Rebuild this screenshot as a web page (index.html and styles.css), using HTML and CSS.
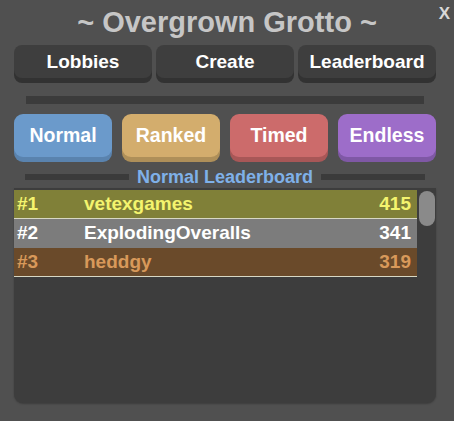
FILE: index.html
```html
<!DOCTYPE html>
<html lang="en">
<head>
    <meta charset="UTF-8">
    <meta name="viewport" content="width=device-width, initial-scale=1.0">
    <title>Overgrown Grotto</title>
    <link rel="stylesheet" href="styles.css">
</head>
<body>
<div class="popup">
    <div class="title">~ Overgrown Grotto ~</div>
    <button class="close">X</button>

    <div class="tabs">
        <button class="tab">Lobbies</button>
        <button class="tab">Create</button>
        <button class="tab">Leaderboard</button>
    </div>

    <div class="divider"></div>

    <div class="modes">
        <button class="mode normal">Normal</button>
        <button class="mode ranked">Ranked</button>
        <button class="mode timed">Timed</button>
        <button class="mode endless">Endless</button>
    </div>

    <div class="board-label">
        <span class="line"></span>
        <span class="label-text">Normal Leaderboard</span>
        <span class="line"></span>
    </div>

    <div class="board">
        <div class="rows">
            <div class="row first">
                <span class="rank">#1</span>
                <span class="name">vetexgames</span>
                <span class="score">415</span>
            </div>
            <div class="row second">
                <span class="rank">#2</span>
                <span class="name">ExplodingOveralls</span>
                <span class="score">341</span>
            </div>
            <div class="row third">
                <span class="rank">#3</span>
                <span class="name">heddgy</span>
                <span class="score">319</span>
            </div>
        </div>
        <div class="scrollbar">
            <div class="thumb"></div>
        </div>
    </div>
</div>
</body>
</html>
```

FILE: styles.css
```css
body {
    margin: 0;
    background-color: #505050;
    font-family: "Liberation Sans", Arial, sans-serif;
    font-weight: bold;
}
.popup {
    position: relative;
    width: 454px;
    height: 421px;
    box-sizing: border-box;
    padding: 0 18px 0 14px;
}
.title {
    height: 45px;
    line-height: 45px;
    text-align: center;
    font-size: 29px;
    color: #c6c6c6;
    padding-left: 4px;
}
.close {
    position: absolute;
    top: 4px;
    right: 4px;
    background: none;
    border: none;
    padding: 0;
    font-family: inherit;
    font-weight: bold;
    font-size: 17px;
    color: #d8d8d8;
}
button {
    font-family: inherit;
    font-weight: bold;
    cursor: pointer;
}
.tabs {
    display: flex;
    gap: 4px;
}
.tab {
    flex: 1;
    height: 33px;
    border: none;
    border-radius: 8px;
    background-color: #3e3e3e;
    box-shadow: 0 5px 0 #323232;
    color: #fff;
    font-size: 19px;
}
.divider {
    height: 8px;
    margin: 18px 12px 0;
    background-color: #3b3b3b;
}
.modes {
    display: flex;
    gap: 10px;
    margin-top: 10px;
}
.mode {
    flex: 1;
    height: 43px;
    border: none;
    border-radius: 9px;
    color: #fff;
    font-size: 19.5px;
}
.normal {
    background-color: #6b9acb;
    box-shadow: 0 5px 0 #5a83ae;
}
.ranked {
    background-color: #d3ad6d;
    box-shadow: 0 5px 0 #ae8f59;
}
.timed {
    background-color: #cc6b6b;
    box-shadow: 0 5px 0 #a85757;
}
.endless {
    background-color: #9d6dc9;
    box-shadow: 0 5px 0 #7f58a5;
}
.board-label {
    display: flex;
    align-items: center;
    gap: 8px;
    margin: 12px 11px 0;
    height: 16px;
}
.line {
    flex: 1;
    height: 6px;
    background-color: #3b3b3b;
}
.label-text {
    color: #7fb0e8;
    font-size: 18px;
}
.board {
    display: flex;
    height: 215px;
    margin-top: 3px;
    background-color: #3d3d3d;
    border-radius: 0 0 9px 9px;
    box-shadow: 0 1px 2px rgba(0, 0, 0, 0.25);
    overflow: hidden;
}
.rows {
    flex: 1;
    padding-top: 2px;
}
.row {
    display: flex;
    height: 28px;
    line-height: 28px;
    padding: 0 6px 0 3px;
    border-bottom: 1px solid #d8d8c4;
    font-size: 19px;
}
.rank {
    width: 67px;
}
.name {
    flex: 1;
}
.first {
    background-color: #808038;
    color: #f4f46e;
}
.second {
    background-color: #7c7c7c;
    color: #ffffff;
    border-bottom: none;
    height: 29px;
}
.third {
    background-color: #6a4a2a;
    color: #d8995a;
}
.scrollbar {
    width: 19px;
    padding: 3px 1px 0 2px;
    box-sizing: border-box;
}
.thumb {
    height: 35px;
    border-radius: 8px;
    background-color: #8a8a8a;
}
```
